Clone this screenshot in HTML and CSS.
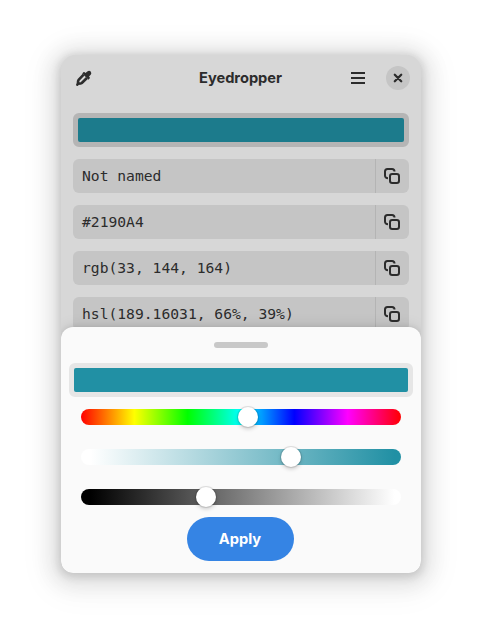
FILE: index.html
```html
<!DOCTYPE html>
<html lang="en">
<head>
<meta charset="utf-8">
<title>Eyedropper</title>
<link rel="stylesheet" href="styles.css">
</head>
<body>
<svg width="0" height="0" class="defs">
  <symbol id="copy" viewBox="0 0 16 16">
    <path d="M4 10.2C2.2 10.2 1 9.2 1 7.5V3.5C1 2 2 1 3.500 1H8C9.600 1 10.500 2 10.500 3.500" fill="none" stroke="currentColor" stroke-width="2"/>
    <rect x="6" y="6" width="9" height="9" rx="2.200" fill="none" stroke="currentColor" stroke-width="2"/>
  </symbol>
</svg>
<main class="window">
  <header class="header">
    <button class="tool" aria-label="Pick color">
      <svg width="16" height="16" viewBox="0 0 16 16">
        <path d="M7.600 4.700 2.600 9.800Q1.900 10.600 1.900 13.700 5 13.700 5.800 13L10.900 8" fill="none" stroke="currentColor" stroke-width="2.600" stroke-linejoin="round"/>
        <path d="M6.300 3.500 7.300 2.300Q8 1.700 8.700 2.300L9.500 3 11.300 1.400Q13.200.2 14.700 1.400 16 3 14.700 4.700L13 6.500 13.700 7.300Q14.200 8 13.600 8.600L12.400 9.700Z" fill="currentColor"/>
        <circle cx="1.300" cy="14.700" r="1.200" fill="currentColor"/>
      </svg>
    </button>
    <h1 class="title">Eyedropper</h1>
    <div class="controls">
      <button class="tool" aria-label="Menu">
        <svg width="16" height="16" viewBox="0 0 16 16"><path d="M1 3h14M1 8h14M1 13h14" stroke="currentColor" stroke-width="2"/></svg>
      </button>
      <button class="close" aria-label="Close">
        <svg width="16" height="16" viewBox="0 0 16 16"><path d="m4.800 4.800 6.400 6.400m0-6.400-6.400 6.400" stroke="currentColor" stroke-width="2.300" stroke-linecap="round"/></svg>
      </button>
    </div>
  </header>
  <div class="content">
    <div class="swatch swatch-dim"></div>
    <div class="row"><span class="value">Not named</span><button class="copy" aria-label="Copy"><svg width="16" height="16"><use href="#copy"/></svg></button></div>
    <div class="row"><span class="value">#2190A4</span><button class="copy" aria-label="Copy"><svg width="16" height="16"><use href="#copy"/></svg></button></div>
    <div class="row"><span class="value">rgb(33, 144, 164)</span><button class="copy" aria-label="Copy"><svg width="16" height="16"><use href="#copy"/></svg></button></div>
    <div class="row"><span class="value">hsl(189.16031, 66%, 39%)</span><button class="copy" aria-label="Copy"><svg width="16" height="16"><use href="#copy"/></svg></button></div>
  </div>
  <section class="sheet">
    <div class="handle"></div>
    <div class="swatch swatch-live"></div>
    <div class="sliders">
      <div class="slider hue"><span class="thumb" style="left:167px"></span></div>
      <div class="slider saturation"><span class="thumb" style="left:210px"></span></div>
      <div class="slider lightness"><span class="thumb" style="left:125px"></span></div>
    </div>
    <button class="apply">Apply</button>
  </section>
</main>
</body>
</html>
```
FILE: styles.css
```css
* { box-sizing: border-box; }
body {
  margin: 0;
  height: 640px;
  padding: 55px 61px 67px;
  background: #fff;
  overflow: hidden;
  font-family: Inter, sans-serif;
  color: #2c2c2c;
}
button {
  display: grid;
  place-items: center;
  border: 0;
  padding: 0;
  margin: 0;
  background: none;
  color: inherit;
  font: inherit;
}
svg { display: block; }
.defs { position: absolute; }
.window {
  position: relative;
  width: 360px;
  height: 518px;
  border-radius: 15px 15px 12px 12px;
  background: #d7d7d7;
  box-shadow: 0 2px 8px 2px rgba(0,0,0,.13), 0 3px 20px 10px rgba(0,0,0,.09), 0 6px 32px 16px rgba(0,0,0,.04);
}
.header {
  display: grid;
  grid-template-columns: 1fr auto 1fr;
  align-items: center;
  height: 46px;
  padding: 0 6px;
}
.tool { width: 34px; height: 34px; }
.title { margin: 0 1px 0 0; font-size: 14.67px; line-height: 20px; font-weight: 700; letter-spacing: -0.04px; }
.controls { display: flex; justify-content: flex-end; align-items: center; gap: 11px; padding-right: 5px; }
.close { width: 24px; height: 24px; border-radius: 50%; background: #c5c5c5; }
.content { display: flex; flex-direction: column; gap: 12px; padding: 12px; }
.swatch { height: 34px; border: 5px solid; border-radius: 6px; }
.swatch-dim { border-color: #b5b5b5; background: #b5b5b5; }
.swatch-dim::before, .swatch-live::before { content: ""; display: block; height: 24px; border-radius: 2px; }
.swatch-dim::before { background: #1c7b8c; }
.swatch-live { width: 344px; border-color: #e6e6e6; background: #e6e6e6; }
.swatch-live::before { background: #2190a4; }
.row { display: flex; height: 34px; border-radius: 6px; background: #c5c5c5; }
.value {
  flex: 1;
  padding-left: 9px;
  font: 14.67px/34px "DejaVu Sans Mono", monospace;
  white-space: pre;
}
.copy { width: 34px; padding-right: 1px; border-left: 1px solid #b4b4b4; }
.sheet {
  position: absolute;
  inset: auto 0 0;
  height: 246px;
  display: flex;
  flex-direction: column;
  align-items: center;
  padding-top: 15px;
  border-radius: 12px;
  background: #fafafa;
  box-shadow: 0 -1px 4px rgba(0,0,0,.08), 0 -2px 14px rgba(0,0,0,.08);
  clip-path: inset(-40px 0 0 0 round 0 0 12px 12px);
}
.handle { width: 54px; height: 6px; border-radius: 3px; background: #c8c8c8; margin-bottom: 15px; }
.sliders { display: flex; flex-direction: column; gap: 24px; width: 320px; padding: 12px 0; }
.slider { position: relative; height: 16px; border-radius: 8px; }
.hue { background: linear-gradient(90deg, #f00, #ff0, #0f0, #0ff, #00f, #f0f, #f00); }
.saturation { background: linear-gradient(90deg, #fff 3%, #2190a4 98%); }
.lightness { background: linear-gradient(90deg, #000 3%, #fff 98%); }
.thumb {
  position: absolute;
  top: -2px;
  width: 20px;
  height: 20px;
  margin-left: -10px;
  border-radius: 50%;
  background: #fff;
  box-shadow: 0 0 0 1px rgba(0,0,0,.1), 0 2px 4px rgba(0,0,0,.2);
}
.apply {
  width: 107px;
  height: 44px;
  margin-right: 1px;
  padding-right: 1px;
  border-radius: 22px;
  background: #3584e4;
  color: #fff;
  font-size: 14.67px;
  font-weight: 700;
}
```
